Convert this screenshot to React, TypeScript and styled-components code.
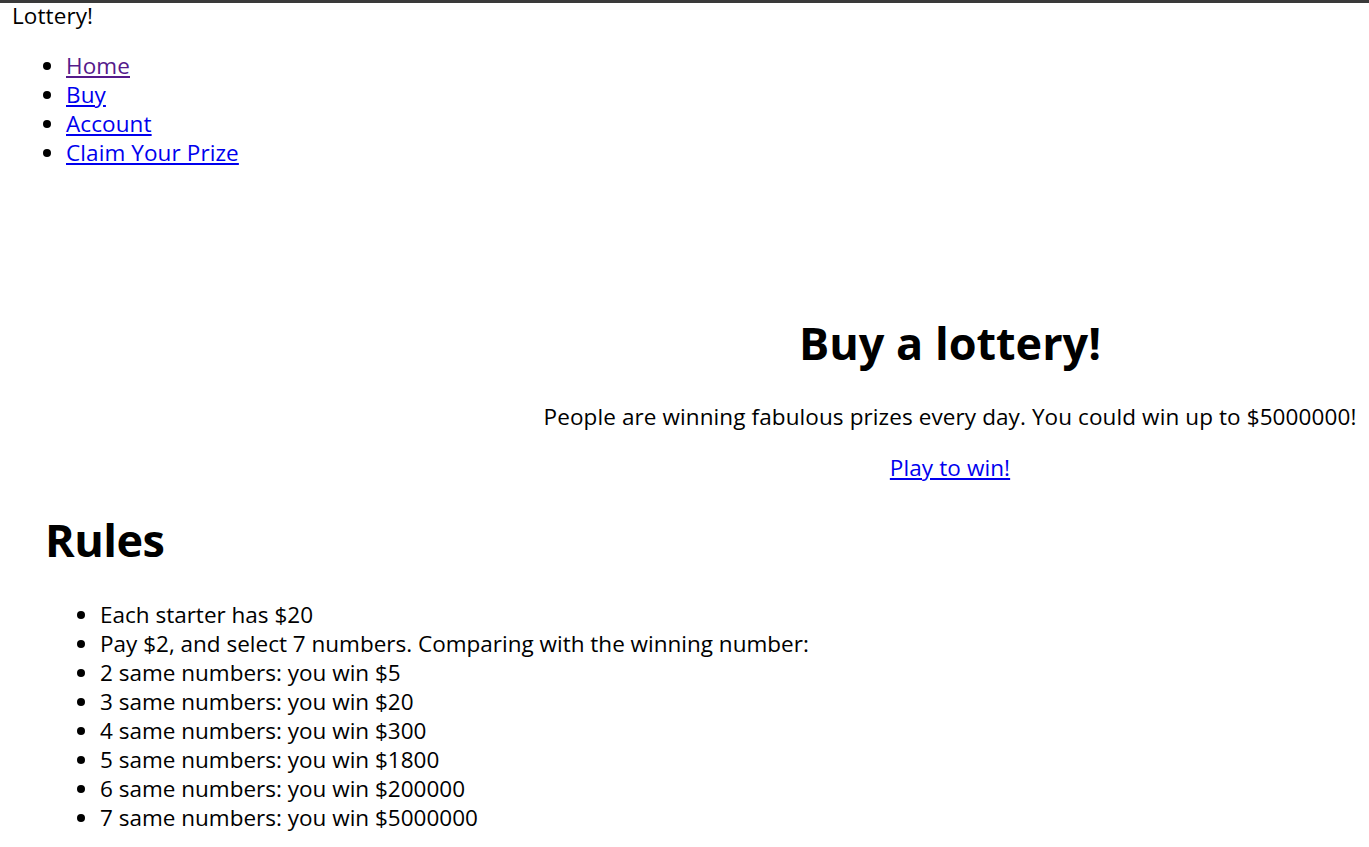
import React from "react";
import styled, { createGlobalStyle } from "styled-components";

const Global = createGlobalStyle`
  html, body { margin: 0; padding: 0; background: #fff; }
  body {
    font-family: "Open Sans", "Noto Sans", sans-serif;
    font-size: 22.5px;
    letter-spacing: 0.1px;
    line-height: 29px;
    color: #000;
  }
`;

const Header = styled.header`
  border-top: 3px solid #3a3a3a;
  padding: 0 12px;
`;

const Brand = styled.div`
  height: 25px;
  line-height: 25px;
`;

const NavList = styled.ul`
  margin: 23px 0 0;
  padding-left: 54px;
  list-style: disc;
`;

const NavLink = styled.a<{ $visited?: boolean }>`
  color: ${(p) => (p.$visited ? "#551a8b" : "#0000ee")};
  text-decoration: underline;
`;

const Hero = styled.section`
  display: flex;
  margin-top: 148px;
`;

const HeroSpacer = styled.div`
  width: 531px;
  flex: none;
`;

const HeroBody = styled.div`
  flex: 1;
  text-align: center;
`;

const HeroTitle = styled.h1`
  font-size: 45px;
  line-height: 56px;
  font-weight: 700;
  letter-spacing: 0;
  margin: 0;
`;

const HeroText = styled.p`
  margin: 31px 0 0;
`;

const HeroLink = styled.a`
  display: inline-block;
  margin-top: 22px;
  color: #0000ee;
  text-decoration: underline;
`;

const Rules = styled.section`
  padding: 0 0 0 45px;
  margin-top: 30px;
`;

const RulesTitle = styled.h1`
  font-size: 45px;
  line-height: 56px;
  font-weight: 700;
  letter-spacing: -0.5px;
  margin: 0;
`;

const RulesList = styled.ul`
  margin: 32px 0 0;
  padding-left: 55px;
  list-style: disc;
  letter-spacing: 0;
`;

const navItems = ["Home", "Buy", "Account", "Claim Your Prize"];
const rules = [
  "Each starter has $20",
  "Pay $2, and select 7 numbers. Comparing with the winning number:",
  "2 same numbers: you win $5",
  "3 same numbers: you win $20",
  "4 same numbers: you win $300",
  "5 same numbers: you win $1800",
  "6 same numbers: you win $200000",
  "7 same numbers: you win $5000000",
];

export default function App() {
  return (
    <>
      <Global />
      <Header>
        <Brand>Lottery!</Brand>
        <nav>
          <NavList>
            {navItems.map((n, i) => (
              <li key={n}>
                <NavLink href="#" $visited={i === 0}>
                  {n}
                </NavLink>
              </li>
            ))}
          </NavList>
        </nav>
      </Header>
      <Hero>
        <HeroSpacer />
        <HeroBody>
          <HeroTitle>Buy a lottery!</HeroTitle>
          <HeroText>
            People are winning fabulous prizes every day. You could win up to $5000000!
          </HeroText>
          <HeroLink href="#">Play to win!</HeroLink>
        </HeroBody>
      </Hero>
      <Rules>
        <RulesTitle>Rules</RulesTitle>
        <RulesList>
          {rules.map((r) => (
            <li key={r}>{r}</li>
          ))}
        </RulesList>
      </Rules>
    </>
  );
}
